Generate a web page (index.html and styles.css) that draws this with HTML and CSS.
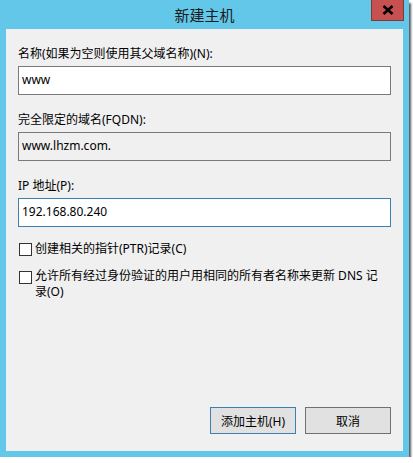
FILE: index.html
```html
<!DOCTYPE html>
<html lang="zh">
<head>
<meta charset="utf-8">
<title>新建主机</title>
<link rel="stylesheet" href="styles.css">
</head>
<body>
<div class="window">
  <div class="titlebar">
    <span class="title">新建主机</span>
    <button class="close" aria-label="关闭">
      <svg width="12" height="10" viewBox="0 0 12 10"><path d="M1.5 1 L10.5 9 M10.5 1 L1.5 9" stroke="#000" stroke-width="2.6" fill="none"/></svg>
    </button>
  </div>
  <div class="content">
    <div class="field">
      <label class="label">名称(如果为空则使用其父域名称)(N):</label>
      <div class="input">www</div>
    </div>
    <div class="field">
      <label class="label">完全限定的域名(FQDN):</label>
      <div class="input readonly">www.lhzm.com.</div>
    </div>
    <div class="field">
      <label class="label">IP 地址(P):</label>
      <div class="input focused">192.168.80.240</div>
    </div>
    <div class="check first">
      <span class="box"></span>
      <span class="check-text">创建相关的指针(PTR)记录(C)</span>
    </div>
    <div class="check second">
      <span class="box"></span>
      <span class="check-text">允许所有经过身份验证的用户用相同的所有者名称来更新 DNS 记录(O)</span>
    </div>
    <div class="buttons">
      <button class="btn default">添加主机(H)</button>
      <button class="btn">取消</button>
    </div>
  </div>
</div>
</body>
</html>
```
FILE: styles.css
```css
html, body {
  margin: 0;
  padding: 0;
  background: #ffffff;
}
body {
  font-family: "Noto Sans", "Noto Sans CJK SC", sans-serif;
  font-size: 12px;
  color: #000;
}
.window {
  position: relative;
  width: 409px;
  height: 457px;
  background: #63c7e9;
  box-shadow: 2px 3px 2px rgba(0,0,0,0.65);
  display: flex;
  flex-direction: column;
  box-sizing: border-box;
  padding: 0 6px 6px 6px;
}
.titlebar {
  height: 29px;
  display: flex;
  align-items: center;
  justify-content: center;
  flex: none;
}
.title {
  font-family: "Noto Sans CJK SC", sans-serif;
  font-size: 15px;
  color: #1b1b1b;
  line-height: 1;
  margin-top: -1px;
}
.close {
  position: absolute;
  top: 0;
  right: 5px;
  width: 33px;
  height: 21px;
  box-sizing: border-box;
  border: 1px solid #7e3a33;
  border-top: none;
  background: #c75050;
  padding: 0;
  display: flex;
  align-items: center;
  justify-content: center;
}
.content {
  flex: 1;
  background: #f0f0f0;
  padding: 17px 12px 17px 12px;
  display: flex;
  flex-direction: column;
}
.field {
  display: flex;
  flex-direction: column;
  gap: 4px;
  margin-bottom: 17px;
}
.field:nth-child(3) {
  margin-bottom: 14px;
}
.label {
  line-height: 16px;
  height: 16px;
  white-space: nowrap;
}
.input {
  height: 29px;
  box-sizing: border-box;
  border: 1px solid #7a7a7a;
  background: #fff;
  padding: 0 3px;
  line-height: 25px;
}
.input.readonly {
  background: #f0f0f0;
}
.input.focused {
  border-color: #3c7fb1;
}
.check {
  display: flex;
  align-items: flex-start;
  gap: 3px;
  line-height: 16px;
  padding-left: 1px;
}
.check.first {
  margin-bottom: 11px;
}
.box {
  flex: none;
  width: 13px;
  height: 13px;
  box-sizing: border-box;
  border: 1px solid #333;
  background: #fff;
  margin-top: 2px;
}
.check.second .box {
  margin-top: 3px;
}
.check-text {
  flex: 1;
  padding-right: 7px;
}
.buttons {
  margin-top: auto;
  display: flex;
  justify-content: flex-end;
  gap: 9px;
}
.btn {
  width: 86px;
  height: 27px;
  box-sizing: border-box;
  border: 1px solid #707070;
  background: #e1e1e1;
  font-family: inherit;
  font-size: 12px;
  color: #000;
  padding: 0;
}
.btn.default {
  border-color: #3c7fb1;
}
```
